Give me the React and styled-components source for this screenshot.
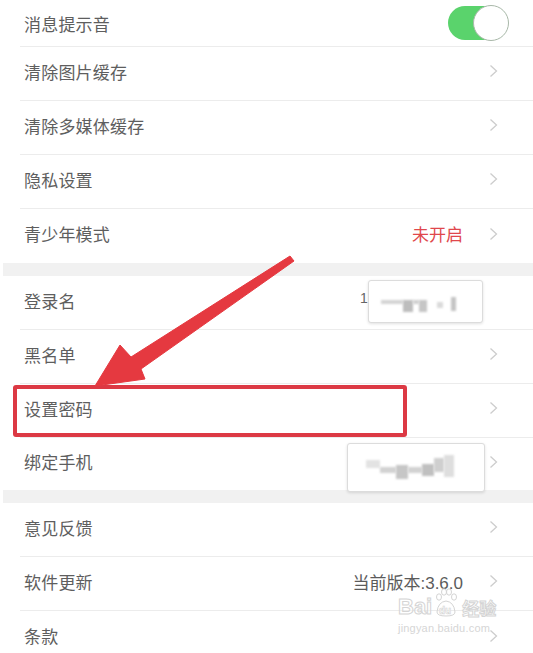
import React from "react";
import styled, { createGlobalStyle } from "styled-components";

const GlobalStyle = createGlobalStyle`
  body {
    margin: 0;
    background: #fff;
    font-family: "Noto Sans CJK SC", "Noto Sans", sans-serif;
  }
`;

const Page = styled.div`
  position: relative;
  width: 533px;
  height: 653px;
  overflow: hidden;
  background: #fff;
`;

const Section = styled.div`
  display: flex;
  flex-direction: column;
`;

const Gap = styled.div`
  height: 13px;
  margin-left: 3px;
  background: #f1f1f1;
`;

const Row = styled.div`
  display: flex;
  align-items: center;
  height: ${(p) => p.$h || 54}px;
  margin-left: 20px;
  padding: 0 35px ${(p) => (p.$pb ?? 5)}px 4px;
  box-sizing: border-box;
  border-bottom: ${(p) => (p.$last ? "none" : "1px solid #ececec")};
`;

const Label = styled.span`
  flex: 1;
  font-size: 17px;
  color: #5e5e5e;
  letter-spacing: 0.2px;
`;

const Value = styled.span`
  font-size: 17px;
  color: ${(p) => p.$color || "#5b5b5b"};
  font-family: "Liberation Sans", "Noto Sans CJK SC", sans-serif;
  margin-right: 26px;
`;

const Chevron = styled.svg`
  width: 9px;
  height: 14px;
  flex: none;
`;

const Switch = styled.div`
  position: relative;
  width: 60px;
  height: 34px;
  margin-right: -10px;
  border-radius: 17px;
  background: #5ad36c;
`;

const Knob = styled.div`
  position: absolute;
  right: -1px;
  top: -1px;
  width: 34px;
  height: 34px;
  border-radius: 50%;
  background: #fff;
  border: 1px solid #a9b8a9;
`;

const Overlay = styled.svg`
  position: absolute;
  left: 0;
  top: 0;
  width: 533px;
  height: 653px;
  pointer-events: none;
`;

const Highlight = styled.div`
  position: absolute;
  left: 13px;
  top: 385px;
  width: 394px;
  height: 52px;
  box-sizing: border-box;
  border: 4px solid #dc3944;
  border-radius: 3px;
`;

const Mask = styled.div`
  position: absolute;
  left: ${(p) => p.$x}px;
  top: ${(p) => p.$y}px;
  width: ${(p) => p.$w}px;
  height: ${(p) => p.$h}px;
  box-sizing: border-box;
  padding: 0 ${(p) => p.$pad || 10}px;
  display: flex;
  align-items: center;
  background: #fff;
  border: 1px solid #dcdcdc;
  border-radius: 3px;
  box-shadow: 0 1px 3px rgba(0, 0, 0, 0.12);
  filter: none;
`;

const Block = styled.div`
  flex: none;
  width: ${(p) => p.$w}px;
  height: ${(p) => p.$h}px;
  margin-top: ${(p) => p.$dy || 0}px;
  background: ${(p) => p.$c || "#c8c8c8"};
  filter: blur(1.2px);
`;

const Peek = styled.span`
  position: absolute;
  left: 360px;
  top: 290px;
  font-size: 14px;
  color: #666;
  font-family: "Liberation Sans", sans-serif;
`;

const Watermark = styled.div`
  position: absolute;
  left: 398px;
  top: 588px;
  display: flex;
  flex-direction: column;
  align-items: flex-start;
  color: rgba(255, 255, 255, 0.4);
  pointer-events: none;
`;

const Brand = styled.div`
  display: flex;
  align-items: flex-end;
  gap: 2px;
  font-family: "Liberation Sans", "Noto Sans CJK SC", sans-serif;
  font-weight: 700;
  font-size: 22px;
  line-height: 1;
  -webkit-text-stroke: 1px #d4d4d4;
`;

const BrandCn = styled.span`
  font-size: 17px;
  margin-left: 2px;
`;

const Domain = styled.div`
  margin-top: 4px;
  font-family: "Liberation Sans", sans-serif;
  font-size: 11px;
  color: #d6d6d6;
  letter-spacing: 0.2px;
`;

const Arrow = () => (
  <Chevron viewBox="0 0 9 14">
    <path d="M1.5 1.5 L7.5 7 L1.5 12.5" fill="none" stroke="#cdcdcd" strokeWidth="1.3" />
  </Chevron>
);

const sections = [
  [
    { label: "消息提示音", toggle: true, h: 47, pb: 0 },
    { label: "清除图片缓存" },
    { label: "清除多媒体缓存" },
    { label: "隐私设置" },
    { label: "青少年模式", value: "未开启", color: "#e0474c" },
  ],
  [
    { label: "登录名", noArrow: true },
    { label: "黑名单" },
    { label: "设置密码" },
    { label: "绑定手机", h: 52 },
  ],
  [{ label: "意见反馈" }, { label: "软件更新", value: "当前版本:3.6.0" }, { label: "条款" }],
];

const loginBlur = [
  { w: 22, h: 4, c: "#d4d4d4" },
  { w: 10, h: 12, c: "#bdbdbd", dy: 8 },
  { w: 6, h: 4, c: "#cfcfcf" },
  { w: 8, h: 12, c: "#c6c6c6", dy: 8 },
  { w: 10, h: 0 },
  { w: 6, h: 6, c: "#dadada", dy: 6 },
  { w: 8, h: 0 },
  { w: 5, h: 14, c: "#c4c4c4", dy: 4 },
];

const phoneBlur = [
  { w: 8, h: 0 },
  { w: 14, h: 8, c: "#e3e3e3", dy: -8 },
  { w: 16, h: 6, c: "#d2d2d2", dy: 4 },
  { w: 12, h: 14, c: "#c6c6c6", dy: 8 },
  { w: 14, h: 6, c: "#d2d2d2", dy: 4 },
  { w: 12, h: 12, c: "#c0c0c0", dy: 4 },
  { w: 10, h: 14, c: "#cfcfcf", dy: -6 },
  { w: 10, h: 22, c: "#dedede", dy: -4 },
];

export default function App() {
  return (
    <>
      <GlobalStyle />
      <Page>
        {sections.map((rows, si) => (
          <React.Fragment key={si}>
            {si > 0 && <Gap />}
            <Section>
              {rows.map((r, i) => (
                <Row key={r.label} $h={r.h} $pb={r.pb} $last={i === rows.length - 1}>
                  <Label>{r.label}</Label>
                  {r.value && <Value $color={r.color}>{r.value}</Value>}
                  {r.toggle ? (
                    <Switch>
                      <Knob />
                    </Switch>
                  ) : (
                    !r.noArrow && <Arrow />
                  )}
                </Row>
              ))}
            </Section>
          </React.Fragment>
        ))}

        <Peek>1</Peek>
        <Mask $x={368} $y={280} $w={115} $h={43} $pad={12}>
          {loginBlur.map((b, i) => (
            <Block key={i} $w={b.w} $h={b.h} $c={b.c} $dy={b.dy} />
          ))}
        </Mask>
        <Mask $x={347} $y={443} $w={138} $h={49} $pad={10}>
          {phoneBlur.map((b, i) => (
            <Block key={i} $w={b.w} $h={b.h} $c={b.c} $dy={b.dy} />
          ))}
        </Mask>

        <Highlight />

        <Overlay viewBox="0 0 533 653">
          <polygon
            points="95,386 120,345 131,357 290,256 294,261 141,369 145,379"
            fill="#e53940"
            stroke="#e53940"
            strokeWidth="1"
            strokeLinejoin="round"
          />
        </Overlay>

        <Watermark>
          <Brand>
            <span>Bai</span>
            <svg width="24" height="30" viewBox="0 0 24 30">
              <g fill="none" stroke="#d4d4d4" strokeWidth="1">
                <ellipse cx="5" cy="9" rx="2.5" ry="3.2" />
                <ellipse cx="10" cy="4" rx="2.5" ry="3.2" />
                <ellipse cx="15" cy="4" rx="2.5" ry="3.2" />
                <ellipse cx="20" cy="9" rx="2.5" ry="3.2" />
                <path d="M3 24 Q4 14 12 13 Q20 14 21 24 Q21 28 12 28 Q3 28 3 24 Z" />
              </g>
              <text x="5" y="26" fontSize="10" fontFamily="Liberation Sans" fill="#fff" stroke="#d4d4d4" strokeWidth="0.6">
                du
              </text>
            </svg>
            <BrandCn>经验</BrandCn>
          </Brand>
          <Domain>jingyan.baidu.com</Domain>
        </Watermark>
      </Page>
    </>
  );
}
